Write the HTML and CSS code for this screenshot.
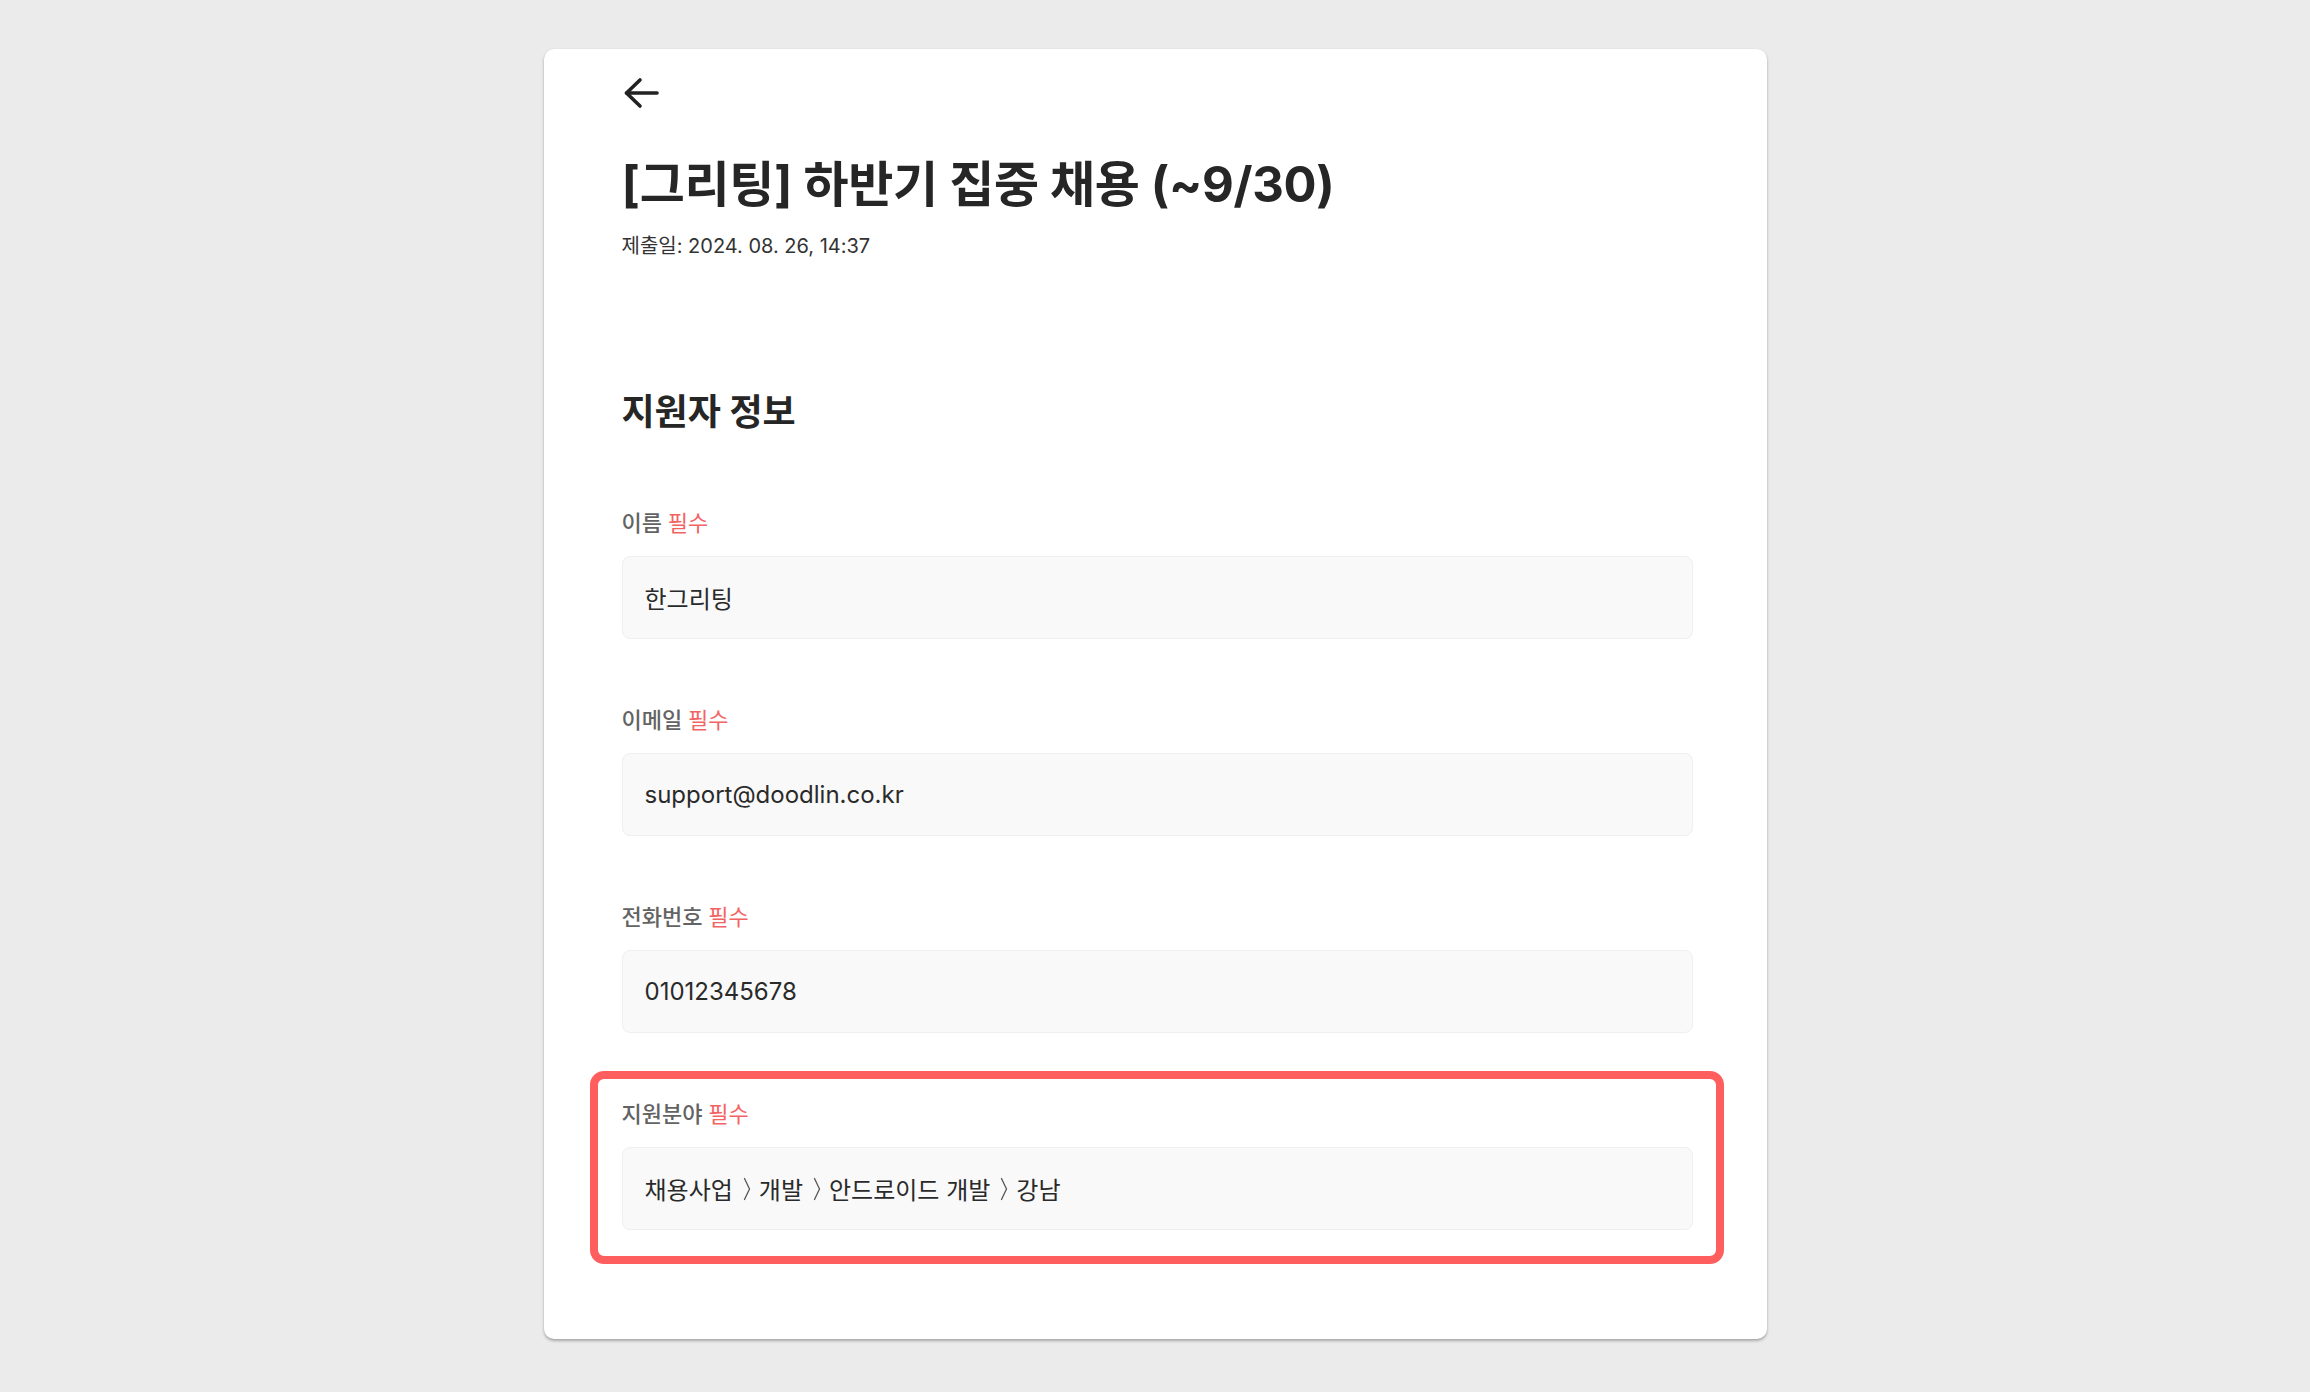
FILE: index.html
```html
<!DOCTYPE html>
<html lang="ko">
<head>
<meta charset="utf-8">
<title>지원서</title>
<link rel="stylesheet" href="styles.css">
</head>
<body>
<main class="card">
  <button class="back" type="button" aria-label="뒤로">
    <svg width="40" height="34" viewBox="0 0 40 34" fill="none" stroke="#222" stroke-width="3.6" stroke-linecap="round" stroke-linejoin="round">
      <path d="M18 4 L4.5 17 L18 30"/>
      <path d="M4.5 17 H35"/>
    </svg>
  </button>
  <h1 class="title">[그리팅] 하반기 집중 채용 (~9/30)</h1>
  <p class="date">제출일: 2024. 08. 26, 14:37</p>

  <h2 class="section">지원자 정보</h2>

  <div class="fields">
    <div class="field">
      <div class="label">이름 <span class="req">필수</span></div>
      <div class="input">한그리팅</div>
    </div>
    <div class="field">
      <div class="label">이메일 <span class="req">필수</span></div>
      <div class="input">support@doodlin.co.kr</div>
    </div>
    <div class="field">
      <div class="label">전화번호 <span class="req">필수</span></div>
      <div class="input">01012345678</div>
    </div>
    <div class="field highlighted">
      <div class="label">지원분야 <span class="req">필수</span></div>
      <div class="input">
        <span>채용사업</span>
        <svg class="sep" width="8" height="24" viewBox="0 0 8 24" fill="none" stroke="#555" stroke-width="1.3" stroke-linecap="round" stroke-linejoin="round"><path d="M1.5 1.5 L6.5 12 L1.5 22.5"/></svg>
        <span>개발</span>
        <svg class="sep" width="8" height="24" viewBox="0 0 8 24" fill="none" stroke="#555" stroke-width="1.3" stroke-linecap="round" stroke-linejoin="round"><path d="M1.5 1.5 L6.5 12 L1.5 22.5"/></svg>
        <span>안드로이드 개발</span>
        <svg class="sep" width="8" height="24" viewBox="0 0 8 24" fill="none" stroke="#555" stroke-width="1.3" stroke-linecap="round" stroke-linejoin="round"><path d="M1.5 1.5 L6.5 12 L1.5 22.5"/></svg>
        <span>강남</span>
      </div>
    </div>
  </div>
</main>
</body>
</html>
```

FILE: styles.css
```css
* { box-sizing: border-box; }

html, body {
  margin: 0;
  padding: 0;
  background: #ebebeb;
}

body {
  font-family: "Inter", "Noto Sans CJK KR", "Noto Sans", sans-serif;
  color: #222;
  padding: 49px 0 49px;
}

.card {
  width: 1223px;
  margin: 0 auto;
  background: #fff;
  border-radius: 10px;
  box-shadow: 0 2px 3px rgba(0, 0, 0, 0.28), 0 0 1px rgba(0, 0, 0, 0.12);
  padding: 27px 74px 109px 78px;
}

.back {
  display: block;
  border: 0;
  background: none;
  padding: 0;
  margin: 0;
  width: 40px;
  height: 34px;
  cursor: pointer;
}
.back svg { display: block; }

.title {
  margin: 44px 0 0;
  font-size: 49px;
  line-height: 62px;
  font-weight: 700;
  color: #262626;
  letter-spacing: -0.3px;
}

.date {
  margin: 16px 0 0;
  font-size: 20px;
  line-height: 28px;
  color: #333;
}

.section {
  margin: 130px 0 0;
  font-size: 36px;
  line-height: 44px;
  font-weight: 700;
  color: #262626;
}

.fields {
  margin-top: 74px;
  display: flex;
  flex-direction: column;
  gap: 66px;
}

.field {
  display: flex;
  flex-direction: column;
  gap: 18px;
}

.label {
  font-size: 22px;
  line-height: 30px;
  font-weight: 500;
  color: #636363;
}

.req {
  color: #f26363;
  font-weight: 400;
}

.input {
  height: 83px;
  display: flex;
  align-items: center;
  padding: 0 22px;
  background: #f9f9f9;
  border: 1.5px solid #efefef;
  border-radius: 8px;
  font-size: 24px;
  color: #2a2a2a;
}

.sep {
  display: block;
  flex: none;
  margin: 0 8px 0 10px;
}

.highlighted {
  position: relative;
}

.highlighted::after {
  content: "";
  position: absolute;
  top: -28px;
  left: -32px;
  right: -31px;
  bottom: -34px;
  border: 8px solid #ff5e5e;
  border-radius: 14px;
  pointer-events: none;
}
```
